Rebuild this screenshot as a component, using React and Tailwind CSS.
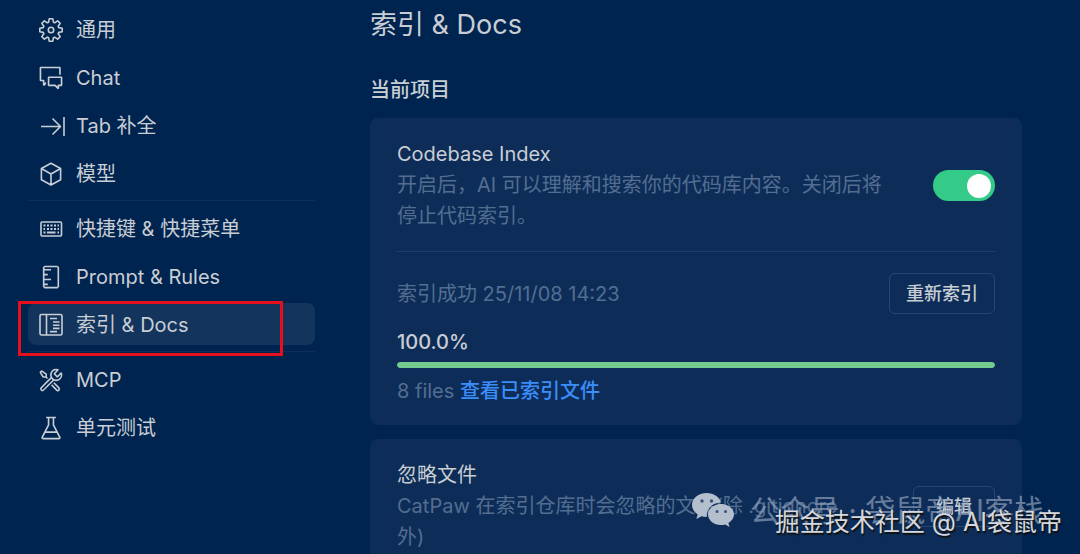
import React, { useState } from "react";
import {
  VscCommentDiscussion,
  VscSymbolRuler,
  VscTools,
  VscBeaker,
} from "react-icons/vsc";

function Svg({ className, children }) {
  return (
    <svg
      viewBox="-1 -1 26 26"
      className={className}
      fill="none"
      stroke="currentColor"
      strokeWidth="1.6"
      strokeLinejoin="round"
      aria-hidden="true"
    >
      {children}
    </svg>
  );
}

function GearIcon({ className }) {
  return (
    <Svg className={className}>
      <path d="M10.2 .8h3.600l.6 3.400 1.300.6 2.900-2 2.600 2.600-2 2.900.6 1.300 3.400.6v3.600l-3.400.6-.6 1.300 2 2.900-2.600 2.600-2.900-2-1.300.6-.6 3.400h-3.600l-.6-3.400-1.300-.6-2.900 2-2.600-2.600 2-2.900-.6-1.300-3.400-.6v-3.600l3.400-.6.6-1.300-2-2.900 2.600-2.600 2.900 2 1.300-.6z" />
      <circle cx="12" cy="12" r="2.700" />
    </Svg>
  );
}

function TabIcon({ className }) {
  return (
    <Svg className={className}>
      <path d="M2 12.500h19M13.500 4.500l8 8-8 8M25 3v19" />
    </Svg>
  );
}

function CubeIcon({ className }) {
  return (
    <Svg className={className}>
      <path d="M12 1.200l9.600 5.300v11.200L12 23l-9.600-5.300V6.500zM2.400 6.500L12 12l9.600-5.500M12 12v11" />
    </Svg>
  );
}

function KeyboardIcon({ className }) {
  return (
    <Svg className={className}>
      <rect x="2" y="5" width="20.500" height="14" rx="1" />
      <path
        strokeWidth="2"
        d="M4.500 8.500h2M8 8.500h2M11.500 8.500h2M15 8.500h2M18.500 8.500h1.500M4.500 12h1.500M8 12h2M11.500 12h2M15 12h2M18.500 12h1.500M4.500 15.500h2M8 15.500h8.500M18.500 15.500h1.500"
      />
    </Svg>
  );
}

function DocsIcon({ className }) {
  return (
    <Svg className={className}>
      <rect x="1" y="1.500" width="22" height="20.500" rx="1.500" />
      <path d="M7.500 1.500V22M11 5.500h7M14 9h6.500M14 12.200h6.500M14 15.400h6.500M11 18.600h7" />
    </Svg>
  );
}

const NAV_GROUPS = [
  [
    { id: "general", label: "通用", icon: GearIcon },
    { id: "chat", label: "Chat", icon: VscCommentDiscussion },
    { id: "tab", label: "Tab 补全", icon: TabIcon },
    { id: "model", label: "模型", icon: CubeIcon },
  ],
  [
    { id: "keys", label: "快捷键 & 快捷菜单", icon: KeyboardIcon },
    { id: "rules", label: "Prompt & Rules", icon: VscSymbolRuler },
    { id: "docs", label: "索引 & Docs", icon: DocsIcon, marked: true },
  ],
  [
    { id: "mcp", label: "MCP", icon: VscTools },
    { id: "test", label: "单元测试", icon: VscBeaker },
  ],
];

function Sidebar({ active, onSelect }) {
  return (
    <nav className="flex w-[315px] shrink-0 flex-col gap-1.5 pl-7 pt-2">
      {NAV_GROUPS.map((group, i) => (
        <React.Fragment key={i}>
          {i > 0 && <hr className="border-t border-[#0b2e5a]" />}
          {group.map(({ id, label, icon: Icon, marked }) => (
            <button
              key={id}
              type="button"
              onClick={() => onSelect(id)}
              className={`relative flex h-[42px] items-center gap-3 rounded-lg px-2.5 pt-0.5 text-left ${
                active === id ? "bg-[#12345d]" : ""
              }`}
            >
              <Icon className="h-[26px] w-[26px] shrink-0 overflow-visible" />
              <span>{label}</span>
              {marked && (
                <span className="pointer-events-none absolute -left-2.5 -top-0.5 h-[55px] w-[265px] border-3 border-[#e60f1b]" />
              )}
            </button>
          ))}
        </React.Fragment>
      ))}
    </nav>
  );
}

function OutlineButton({ children }) {
  return (
    <button
      type="button"
      className="h-[41px] min-w-[82px] shrink-0 rounded-md border border-[#294670] px-4 text-[18px] font-medium"
    >
      {children}
    </button>
  );
}

function IndexCard() {
  const [enabled, setEnabled] = useState(true);
  const progress = 100;

  return (
    <section className="rounded-lg bg-[#0d2d58] px-[27px] pb-[18px] pt-[21px]">
      <div className="flex items-center gap-11 pb-[19px]">
        <div className="flex-1 leading-[31px]">
          <label htmlFor="codebase-index">Codebase Index</label>
          <p className="text-[#536d91]">
            开启后，AI 可以理解和搜索你的代码库内容。关闭后将停止代码索引。
          </p>
        </div>
        <input
          id="codebase-index"
          type="checkbox"
          role="switch"
          checked={enabled}
          onChange={(e) => setEnabled(e.target.checked)}
          className="flex h-[31px] w-[62px] shrink-0 appearance-none items-center rounded-full bg-[#4a5f80] px-1
                     before:h-6 before:w-6 before:rounded-full before:bg-white
                     checked:justify-end checked:bg-[#34cb88]"
        />
      </div>

      <hr className="border-t border-[#1d3c66]" />

      <div className="flex items-center justify-between pt-[21px]">
        <span className="text-[#536d91]">索引成功 25/11/08 14:23</span>
        <OutlineButton>重新索引</OutlineButton>
      </div>

      <p className="mt-4 font-medium leading-6">{progress.toFixed(1)}%</p>
      <div
        role="progressbar"
        aria-label="索引进度"
        aria-valuenow={progress}
        className="mt-2 h-1.5 overflow-hidden rounded-full bg-[#1d3c66]"
      >
        <div className="h-full rounded-full bg-[#74cb8f]" style={{ width: `${progress}%` }} />
      </div>
      <p className="mt-2 leading-[31px] text-[#536d91]">
        8 files{" "}
        <a href="#files" className="font-medium text-[#3b8dfa]">
          查看已索引文件
        </a>
      </p>
    </section>
  );
}

function IgnoreCard() {
  return (
    <section className="flex items-center gap-11 rounded-lg bg-[#0d2d58] px-[27px] py-[21px]">
      <div className="flex-1 leading-[31px]">
        <h3>忽略文件</h3>
        <p className="text-[#536d91]">CatPaw 在索引仓库时会忽略的文件(除 .gitignore 外)</p>
      </div>
      <OutlineButton>编辑</OutlineButton>
    </section>
  );
}

function WechatIcon() {
  return (
    <svg viewBox="0 0 42 34" className="h-[34px] w-[42px] shrink-0" aria-hidden="true">
      <path
        fill="#b4bfce"
        d="M14.500 0C6.500 0 0 5.400 0 12c0 3.900 2.200 7.200 5.700 9.400L4.300 26l5.200-2.700c1.700.5 3.500.7 5.400.7C14 16 20 10 29 9.600 27.600 4 21.600 0 14.500 0z"
      />
      <path
        fill="#b4bfce"
        d="M29 11c-7.200 0-13 4.700-13 10.500S21.800 32 29 32c1.500 0 3-.2 4.300-.6L37.500 34l-1.100-4c3.400-2 5.600-5 5.600-8.500C42 15.700 36.200 11 29 11z"
      />
      <g fill="#3b5376">
        <circle cx="10" cy="8" r="1.700" />
        <circle cx="19.500" cy="8" r="1.700" />
        <circle cx="25" cy="18.500" r="1.500" />
        <circle cx="33.500" cy="18.500" r="1.500" />
      </g>
    </svg>
  );
}

function Watermarks() {
  return (
    <div className="pointer-events-none absolute bottom-4 right-[18px] flex flex-col items-end">
      <div className="mr-[18px] flex h-8 items-center gap-4 text-[30px] leading-8 text-[#8fa0b9]/70">
        <WechatIcon />
        <span className="whitespace-nowrap">公众号 · 袋鼠帝AI客栈</span>
      </div>
      <p className="-mt-5 whitespace-nowrap text-[25px] leading-8 text-[#d5d8dc] [text-shadow:1px_2px_1px_#111]">
        掘金技术社区 @ AI袋鼠帝
      </p>
    </div>
  );
}

export default function App() {
  const [active, setActive] = useState("docs");

  return (
    <div
      className="relative flex h-screen overflow-hidden bg-[#002450] text-[20px] text-[#c9ced4]
                 font-[Inter,'Noto_Sans_CJK_SC',sans-serif]"
    >
      <Sidebar active={active} onSelect={setActive} />

      <main className="min-w-0 flex-1 pl-[55px] pr-[58px] pt-[9px]">
        <h1 className="text-[27px] leading-8">索引 & Docs</h1>
        <h2 className="mb-3 mt-[33px] font-medium leading-8">当前项目</h2>
        <div className="flex flex-col gap-3.5">
          <IndexCard />
          <IgnoreCard />
        </div>
      </main>

      <Watermarks />
    </div>
  );
}
